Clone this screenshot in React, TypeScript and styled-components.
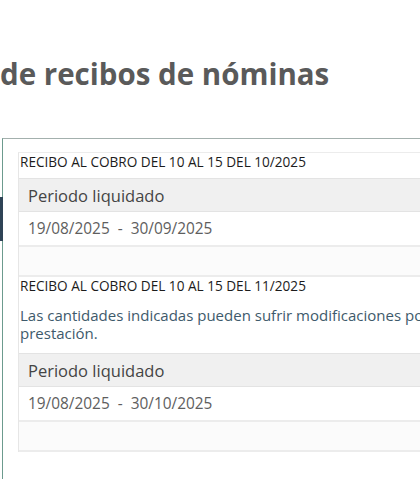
import React from "react";
import styled, { createGlobalStyle } from "styled-components";

type Receipt = {
  title: string;
  note?: string;
  from: string;
  to: string;
};

const receipts: Receipt[] = [
  {
    title: "RECIBO AL COBRO DEL 10 AL 15 DEL 10/2025",
    from: "19/08/2025",
    to: "30/09/2025",
  },
  {
    title: "RECIBO AL COBRO DEL 10 AL 15 DEL 11/2025",
    note: "Las cantidades indicadas pueden sufrir modificaciones por cambios en la prestación.",
    from: "19/08/2025",
    to: "30/10/2025",
  },
];

export default function App() {
  return (
    <Page>
      <GlobalStyle />
      <Heading>de recibos de nóminas</Heading>
      <Panel>
        <SideTab />
        <List>
          {receipts.map((r) => (
            <ReceiptBlock key={r.title}>
              <ReceiptTitle>{r.title}</ReceiptTitle>
              {r.note && <Note>{r.note}</Note>}
              <Table hasNote={!!r.note}>
                <HeaderRow>Periodo liquidado</HeaderRow>
                <DataRow>
                  {r.from}&nbsp;&nbsp;-&nbsp;&nbsp;{r.to}
                </DataRow>
                <FooterRow />
              </Table>
            </ReceiptBlock>
          ))}
        </List>
      </Panel>
    </Page>
  );
}

const GlobalStyle = createGlobalStyle`
  html, body {
    margin: 0;
    padding: 0;
    background: #ffffff;
    overflow: hidden;
  }
`;

const Page = styled.div`
  width: 640px;
  height: 479px;
  overflow: hidden;
  font-family: "Open Sans", "Noto Sans", sans-serif;
`;

const Heading = styled.h1`
  margin: 56px 0 46px 0;
  font-size: 29.5px;
  line-height: 36px;
  font-weight: 700;
  color: #5a5a5a;
  white-space: nowrap;
`;

const Panel = styled.div`
  position: relative;
  margin-left: 2px;
  height: 400px;
  border-top: 1px solid #a3b0ad;
  border-left: 1px solid #6c9b8e;
  padding: 13px 0 0 15px;
`;

const SideTab = styled.div`
  position: absolute;
  left: -3px;
  top: 58px;
  width: 3px;
  height: 44px;
  background: #2e4356;
`;

const List = styled.div`
  border-top: 1px solid #ececec;
  border-left: 1px solid #e6e6e6;
`;

const ReceiptBlock = styled.div`
  display: flex;
  flex-direction: column;
`;

const ReceiptTitle = styled.div`
  padding-left: 1px;
  font-size: 13.6px;
  line-height: 18px;
  color: #1c1c1c;
  white-space: nowrap;
`;

const Note = styled.div`
  margin-top: 11px;
  padding-left: 1px;
  font-size: 15px;
  line-height: 18px;
  color: #3e5a6b;
  width: 560px;
`;

const Table = styled.div<{ hasNote: boolean }>`
  margin-top: ${(p) => (p.hasNote ? "11px" : "7px")};
  display: flex;
  flex-direction: column;
`;

const HeaderRow = styled.div`
  height: 32px;
  display: flex;
  align-items: center;
  padding-left: 9px;
  background: #f0f0f0;
  border-top: 1px solid #e3e3e3;
  border-bottom: 1px solid #e3e3e3;
  font-size: 16.5px;
  color: #444444;
`;

const DataRow = styled.div`
  height: 33px;
  display: flex;
  align-items: center;
  padding-left: 9px;
  border-bottom: 2px solid #ececec;
  font-size: 15.4px;
  color: #5e5e5e;
  white-space: nowrap;
`;

const FooterRow = styled.div`
  height: 28px;
  background: #fbfbfb;
  border-bottom: 2px solid #ececec;
`;
